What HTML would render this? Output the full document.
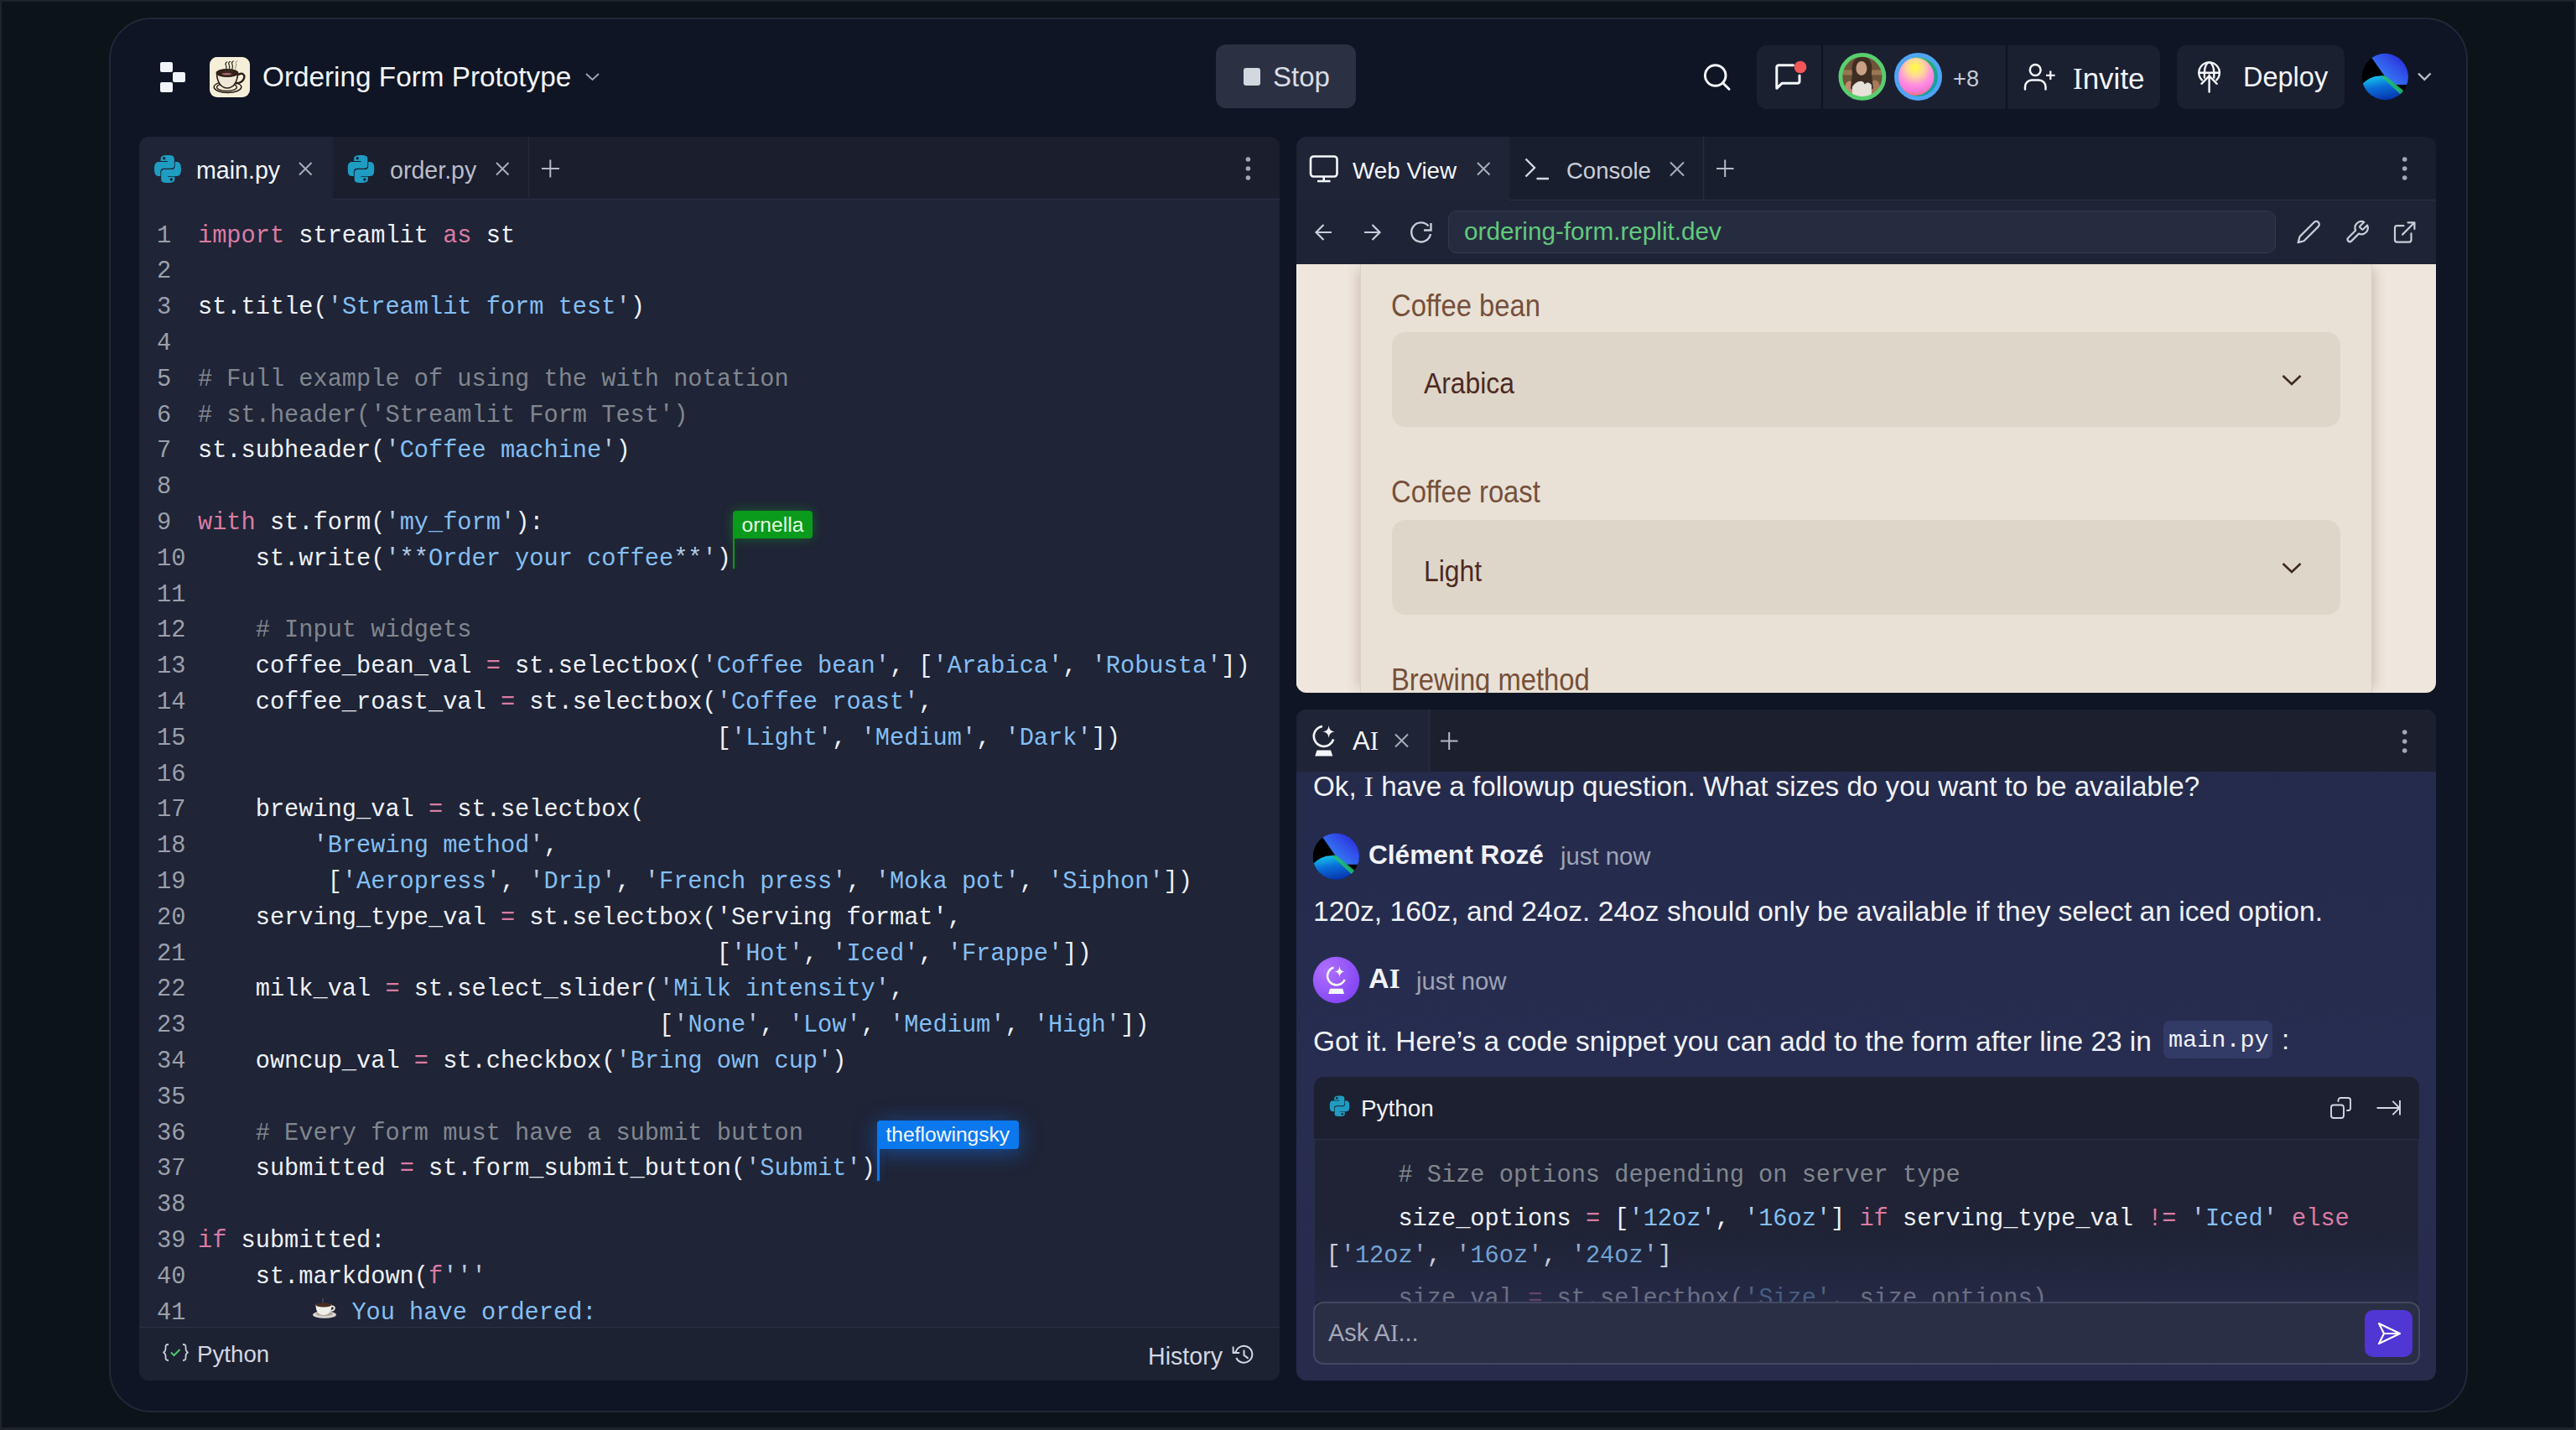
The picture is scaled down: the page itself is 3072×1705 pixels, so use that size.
<!DOCTYPE html>
<html><head><meta charset="utf-8">
<style>
*{margin:0;padding:0;box-sizing:border-box}
html,body{width:3072px;height:1705px;overflow:hidden}
body{background:#0c1319;font-family:"Liberation Sans",sans-serif;color:#eef1f8;position:relative}
.abs{position:absolute}
#frame{position:absolute;left:0;top:0;width:3072px;height:1705px;border:2px solid #1f242c;border-bottom-width:3px}
#win{position:absolute;left:130px;top:21px;width:2813px;height:1663px;border-radius:50px;background:#0f1524;border:2px solid #222836}
.panel{position:absolute;border-radius:12px;overflow:hidden}
#editor{left:166px;top:163px;width:1360px;height:1483px;background:#1f2436}
#edtabs{position:absolute;left:0;top:0;width:1360px;height:75px;background:#1a1e2d;border-bottom:1px solid #2b3044}
.tab{position:absolute;top:0;height:75px}
.tabtxt{position:absolute;font-size:28.6px;white-space:nowrap}
.ln{position:absolute;left:21px;width:60px;height:42.8px;line-height:42.8px;font-family:"Liberation Mono",monospace;font-size:28.65px;color:#9ba0ac}
.cl{position:absolute;left:70px;height:42.8px;line-height:42.8px;font-family:"Liberation Mono",monospace;font-size:28.65px;color:#eef1f8;white-space:pre}
.k{color:#db7ba3}
.s{color:#84bff3}
.q{color:#b3c9e3}
.c{color:#81868f}
.emo{display:inline-block;width:28.7px}
#status{position:absolute;left:0;top:1419px;width:1360px;height:64px;border-top:1px solid #2c3145;background:#1d2233}
#webview{left:1546px;top:163px;width:1359px;height:663px;background:#191e2f}
#ai{left:1546px;top:846px;width:1359px;height:800px;background:linear-gradient(180deg,#242a4a 0%,#272d50 55%,#272c4d 100%)}
</style></head>
<body>
<div id="frame"></div>
<div id="win"></div>

<!-- HEADER -->
<div class="abs" style="left:191px;top:74px;width:15px;height:12px;background:#f2f4fb;border-radius:2px"></div>
<div class="abs" style="left:206px;top:86px;width:15px;height:12px;background:#f2f4fb;border-radius:2px"></div>
<div class="abs" style="left:191px;top:98px;width:15px;height:12px;background:#f2f4fb;border-radius:2px"></div>
<div class="abs" style="left:249.5px;top:67.5px;width:48px;height:48px;background:#f5eed8;border-radius:9px"></div>
<div class="abs" style="left:313px;top:68px;font-size:33.3px;line-height:48px;color:#f3f5fa;white-space:nowrap">Ordering Form Prototype</div>

<div class="abs" style="left:1450px;top:53px;width:167px;height:76px;background:#2b3143;border-radius:12px"></div>
<div class="abs" style="left:1483px;top:81px;width:20px;height:21px;background:#d3d7e0;border-radius:3px"></div>
<div class="abs" style="left:1518px;top:68px;font-size:33px;line-height:48px;color:#d9dde6">Stop</div>

<div class="abs" style="left:2095px;top:54px;width:481px;height:76px;background:#1b2031;border-radius:12px"></div>
<div class="abs" style="left:2596px;top:54px;width:200px;height:76px;background:#1b2031;border-radius:12px"></div>
<div class="abs" style="left:2472px;top:69.5px;font-size:35px;line-height:48px;color:#f3f5fa"><span style="font-family:'Liberation Serif',serif">I</span>nvite</div>
<div class="abs" style="left:2675px;top:68px;font-size:32.5px;line-height:48px;color:#f3f5fa">Deploy</div>
<div class="abs" style="left:2329px;top:72px;font-size:27.2px;line-height:44px;color:#c6cad4">+8</div>

<!-- EDITOR -->
<div class="panel" id="editor">
  <div id="edtabs">
    <div class="tab" style="left:0;width:231px;background:#1f2436"></div>
    <div class="tab" style="left:231px;width:234px;border-right:1px solid #262b3c"></div>
    <div class="tabtxt" style="left:68px;top:17.5px;line-height:44px;color:#f3f5fa">main.py</div>
    <div class="tabtxt" style="left:299px;top:17.5px;line-height:44px;color:#b9bdc8">order.py</div>
  </div>
  <div class="ln" style="top:97.6px">1</div><div class="cl" style="top:97.6px"><span class="k">import</span> streamlit <span class="k">as</span> st</div>
<div class="ln" style="top:140.4px">2</div><div class="cl" style="top:140.4px"></div>
<div class="ln" style="top:183.2px">3</div><div class="cl" style="top:183.2px">st.title(<span class="q">&#x27;</span><span class="s">Streamlit form test</span><span class="q">&#x27;</span>)</div>
<div class="ln" style="top:226.0px">4</div><div class="cl" style="top:226.0px"></div>
<div class="ln" style="top:268.8px">5</div><div class="cl" style="top:268.8px"><span class="c"># Full example of using the with notation</span></div>
<div class="ln" style="top:311.6px">6</div><div class="cl" style="top:311.6px"><span class="c"># st.header(&#x27;Streamlit Form Test&#x27;)</span></div>
<div class="ln" style="top:354.4px">7</div><div class="cl" style="top:354.4px">st.subheader(<span class="q">&#x27;</span><span class="s">Coffee machine</span><span class="q">&#x27;</span>)</div>
<div class="ln" style="top:397.2px">8</div><div class="cl" style="top:397.2px"></div>
<div class="ln" style="top:440.0px">9</div><div class="cl" style="top:440.0px"><span class="k">with</span> st.form(<span class="q">&#x27;</span><span class="s">my_form</span><span class="q">&#x27;</span>):</div>
<div class="ln" style="top:482.8px">10</div><div class="cl" style="top:482.8px">    st.write(<span class="q">&#x27;**</span><span class="s">Order your coffee</span><span class="q">**&#x27;</span>)</div>
<div class="ln" style="top:525.6px">11</div><div class="cl" style="top:525.6px"></div>
<div class="ln" style="top:568.4px">12</div><div class="cl" style="top:568.4px">    <span class="c"># Input widgets</span></div>
<div class="ln" style="top:611.2px">13</div><div class="cl" style="top:611.2px">    coffee_bean_val <span class="k">=</span> st.selectbox(<span class="q">&#x27;</span><span class="s">Coffee bean</span><span class="q">&#x27;</span>, [<span class="q">&#x27;</span><span class="s">Arabica</span><span class="q">&#x27;</span>, <span class="q">&#x27;</span><span class="s">Robusta</span><span class="q">&#x27;</span>])</div>
<div class="ln" style="top:654.0px">14</div><div class="cl" style="top:654.0px">    coffee_roast_val <span class="k">=</span> st.selectbox(<span class="q">&#x27;</span><span class="s">Coffee roast</span><span class="q">&#x27;</span>,</div>
<div class="ln" style="top:696.8px">15</div><div class="cl" style="top:696.8px">                                    [<span class="q">&#x27;</span><span class="s">Light</span><span class="q">&#x27;</span>, <span class="q">&#x27;</span><span class="s">Medium</span><span class="q">&#x27;</span>, <span class="q">&#x27;</span><span class="s">Dark</span><span class="q">&#x27;</span>])</div>
<div class="ln" style="top:739.6px">16</div><div class="cl" style="top:739.6px"></div>
<div class="ln" style="top:782.4px">17</div><div class="cl" style="top:782.4px">    brewing_val <span class="k">=</span> st.selectbox(</div>
<div class="ln" style="top:825.2px">18</div><div class="cl" style="top:825.2px">        <span class="q">&#x27;</span><span class="s">Brewing method</span><span class="q">&#x27;</span>,</div>
<div class="ln" style="top:868.0px">19</div><div class="cl" style="top:868.0px">         [<span class="q">&#x27;</span><span class="s">Aeropress</span><span class="q">&#x27;</span>, <span class="q">&#x27;</span><span class="s">Drip</span><span class="q">&#x27;</span>, <span class="q">&#x27;</span><span class="s">French press</span><span class="q">&#x27;</span>, <span class="q">&#x27;</span><span class="s">Moka pot</span><span class="q">&#x27;</span>, <span class="q">&#x27;</span><span class="s">Siphon</span><span class="q">&#x27;</span>])</div>
<div class="ln" style="top:910.8px">20</div><div class="cl" style="top:910.8px">    serving_type_val <span class="k">=</span> st.selectbox(&#x27;Serving format&#x27;,</div>
<div class="ln" style="top:953.6px">21</div><div class="cl" style="top:953.6px">                                    [<span class="q">&#x27;</span><span class="s">Hot</span><span class="q">&#x27;</span>, <span class="q">&#x27;</span><span class="s">Iced</span><span class="q">&#x27;</span>, <span class="q">&#x27;</span><span class="s">Frappe</span><span class="q">&#x27;</span>])</div>
<div class="ln" style="top:996.4px">22</div><div class="cl" style="top:996.4px">    milk_val <span class="k">=</span> st.select_slider(<span class="q">&#x27;</span><span class="s">Milk intensity</span><span class="q">&#x27;</span>,</div>
<div class="ln" style="top:1039.2px">23</div><div class="cl" style="top:1039.2px">                                [<span class="q">&#x27;</span><span class="s">None</span><span class="q">&#x27;</span>, <span class="q">&#x27;</span><span class="s">Low</span><span class="q">&#x27;</span>, <span class="q">&#x27;</span><span class="s">Medium</span><span class="q">&#x27;</span>, <span class="q">&#x27;</span><span class="s">High</span><span class="q">&#x27;</span>])</div>
<div class="ln" style="top:1082.0px">34</div><div class="cl" style="top:1082.0px">    owncup_val <span class="k">=</span> st.checkbox(<span class="q">&#x27;</span><span class="s">Bring own cup</span><span class="q">&#x27;</span>)</div>
<div class="ln" style="top:1124.8px">35</div><div class="cl" style="top:1124.8px"></div>
<div class="ln" style="top:1167.6px">36</div><div class="cl" style="top:1167.6px">    <span class="c"># Every form must have a submit button</span></div>
<div class="ln" style="top:1210.4px">37</div><div class="cl" style="top:1210.4px">    submitted <span class="k">=</span> st.form_submit_button(<span class="q">&#x27;</span><span class="s">Submit</span><span class="q">&#x27;</span>)</div>
<div class="ln" style="top:1253.2px">38</div><div class="cl" style="top:1253.2px"></div>
<div class="ln" style="top:1296.0px">39</div><div class="cl" style="top:1296.0px"><span class="k">if</span> submitted:</div>
<div class="ln" style="top:1338.8px">40</div><div class="cl" style="top:1338.8px">    st.markdown(<span class="k">f</span><span class="q">&#x27;&#x27;&#x27;</span></div>
<div class="ln" style="top:1381.6px">41</div><div class="cl" style="top:1381.6px">        <span class="emo"></span> <span class="s">You have ordered:</span></div>
  <div id="status">
    <div class="tabtxt" style="left:69px;top:10px;line-height:44px;color:#d3d7e0;font-size:27.7px">Python</div>
    <div class="tabtxt" style="left:1203px;top:12px;line-height:44px;color:#d3d7e0">History</div>
  </div>
</div>

<!-- WEBVIEW -->
<div class="panel" id="webview">
  <div class="abs" style="left:0;top:0;width:254px;height:75px;background:#1f2436"></div>
  <div class="abs" style="left:0;top:75px;width:1359px;height:77px;background:#1e2335"></div><div class="abs" style="left:254px;top:75px;width:1105px;height:1px;background:#2b3044"></div>
  <div class="tabtxt" style="left:67px;top:19px;line-height:44px;color:#f3f5fa;font-size:27.8px">Web View</div>
  <div class="tabtxt" style="left:322px;top:19px;line-height:44px;color:#c9cdd7;font-size:27.5px">Console</div>
  <div class="abs" style="left:181px;top:88px;width:987px;height:51px;background:#262c40;border:1.5px solid #343a4f;border-radius:10px"></div>
  <div class="tabtxt" style="left:200px;top:91px;line-height:44px;color:#62c97c;font-size:29.7px">ordering-form.replit.dev</div>
  <div class="abs" style="left:0;top:152px;width:1359px;height:511px;background:#efe6de;border-left:1px solid #f6f0ea"></div>
  <div class="abs" style="left:76px;top:152px;width:1207px;height:511px;background:#e9e1d6;border-left:1.5px solid #d9cfc4;border-right:1.5px solid #d9cfc4;box-shadow:-10px 0 12px -6px rgba(110,80,55,.22),10px 0 12px -6px rgba(110,80,55,.22)"></div>
  <div class="tabtxt" style="left:112.5px;top:180px;line-height:44px;color:#76503a;font-size:36.4px;transform:scaleX(.9);transform-origin:0 0">Coffee bean</div>
  <div class="abs" style="left:114px;top:233px;width:1131px;height:113px;background:#dfd6ca;border-radius:16px"></div>
  <div class="tabtxt" style="left:152px;top:272px;line-height:44px;color:#4d2a22;font-size:34.7px;transform:scaleX(.918);transform-origin:0 0">Arabica</div>
  <div class="tabtxt" style="left:112.5px;top:402px;line-height:44px;color:#76503a;font-size:36.4px;transform:scaleX(.9);transform-origin:0 0">Coffee roast</div>
  <div class="abs" style="left:114px;top:457px;width:1131px;height:113px;background:#dfd6ca;border-radius:16px"></div>
  <div class="tabtxt" style="left:152px;top:496px;line-height:44px;color:#4d2a22;font-size:34.7px;transform:scaleX(.918);transform-origin:0 0">Light</div>
  <div class="tabtxt" style="left:112.5px;top:626px;line-height:44px;color:#76503a;font-size:36.4px;transform:scaleX(.9);transform-origin:0 0">Brewing method</div>
</div>

<!-- AI -->
<div class="panel" id="ai">
  <div class="abs" style="left:0;top:0;width:1359px;height:74px;background:#1b1f2e"></div>
  <div class="abs" style="left:0;top:0;width:158px;height:74px;background:#1f2436"></div>
  <div class="tabtxt" style="left:67px;top:16px;line-height:44px;color:#f3f5fa;font-size:31px">A<span style="font-family:'Liberation Serif',serif">I</span></div>
  <div class="tabtxt" style="left:20px;top:70px;line-height:44px;color:#f0f2f8;font-size:33.2px">Ok, <span style="font-family:'Liberation Serif',serif">I</span> have a followup question. What sizes do you want to be available?</div>
  <div class="tabtxt" style="left:86px;top:151px;line-height:44px;color:#f0f2f8;font-size:31.6px;font-weight:700">Clément Rozé</div>
  <div class="tabtxt" style="left:315px;top:153px;line-height:44px;color:#9ea3b5;font-size:29.3px">just now</div>
  <div class="tabtxt" style="left:20px;top:219px;line-height:44px;color:#f0f2f8;font-size:33.6px">120z, 160z, and 24oz. 24oz should only be available if they select an iced option.</div>
  <div class="tabtxt" style="left:86px;top:298px;line-height:44px;color:#f0f2f8;font-size:34px;font-weight:700">A<span style="font-family:'Liberation Serif',serif">I</span></div>
  <div class="tabtxt" style="left:143px;top:302px;line-height:44px;color:#9ea3b5;font-size:29.3px">just now</div>
  <div class="tabtxt" style="left:20px;top:374px;line-height:44px;color:#f0f2f8;font-size:33.4px">Got it. Here’s a code snippet you can add to the form after line 23 in</div>
  <div class="abs" style="left:1034px;top:371px;width:130px;height:45px;background:#323a66;border-radius:8px"></div>
  <div class="tabtxt" style="left:1040px;top:373px;line-height:44px;color:#f0f2f8;font-family:'Liberation Mono';font-size:28.5px">main.py</div>
  <div class="tabtxt" style="left:1175px;top:372px;line-height:44px;color:#f0f2f8;font-size:33px">:</div>
  <div class="abs" style="left:21px;top:438px;width:1318px;height:300px;background:#1f2335;border-radius:12px 12px 0 0;border:1px solid #2a2f44"></div>
  <div class="abs" style="left:21px;top:438px;width:1318px;height:75px;background:#1c2030;border-radius:12px 12px 0 0;border-bottom:1px solid #2a2f44"></div>
  <div class="tabtxt" style="left:77px;top:454px;line-height:44px;color:#f0f2f8;font-size:27.9px">Python</div>
  <div class="abs" style="left:20px;top:706px;width:1320px;height:75px;background:#2b2f45;border:2px solid #434861;border-radius:12px"></div>
  <div class="tabtxt" style="left:38px;top:721px;line-height:44px;color:#a3a7b8;font-size:28.9px">Ask A<span style="font-family:'Liberation Serif',serif">I</span>...</div>
  <div class="abs" style="left:1274px;top:716px;width:57px;height:56px;background:#5036d3;border-radius:10px"></div>
</div>



<!-- CURSORS -->
<div class="abs" style="left:874px;top:608.7px;width:94.6px;height:33px;background:#0a9a1c;border-radius:4px 4px 4px 0;box-shadow:0 0 14px rgba(20,200,40,.35)"></div>
<div class="abs" style="left:874px;top:636px;width:2.4px;height:42px;background:#0a9a1c;box-shadow:0 0 8px rgba(20,200,40,.3)"></div>
<div class="abs" style="left:884.5px;top:604px;font-size:24.6px;line-height:44px;color:#e8ffe4;white-space:nowrap">ornella</div>
<div class="abs" style="left:1046px;top:1336px;width:169px;height:34px;background:#0b78ee;border-radius:4px 4px 4px 0;box-shadow:0 4px 26px rgba(20,120,255,.5)"></div>
<div class="abs" style="left:1046px;top:1364px;width:2.6px;height:44px;background:#0b78ee;box-shadow:0 0 8px rgba(20,120,255,.4)"></div>
<div class="abs" style="left:1056.5px;top:1331px;font-size:24.6px;line-height:44px;color:#f4f8ff;white-space:nowrap">theflowingsky</div>

<!-- SNIPPET CODE -->
<div class="abs" style="left:1567px;top:1359px;width:1318px;height:193px;background:linear-gradient(180deg,rgba(38,43,72,0) 55%,rgba(38,43,74,.75) 100%)"></div>
<div class="cl" style="left:1581.5px;top:1381px"><span class="c">     # Size options depending on server type</span></div>
<div class="cl" style="left:1581.5px;top:1433.3px">     size_options <span class="k">=</span> [<span class="q">'</span><span class="s">12oz</span><span class="q">'</span>, <span class="q">'</span><span class="s">16oz</span><span class="q">'</span>] <span class="k">if</span> serving_type_val <span class="k">!=</span> <span class="q">'</span><span class="s">Iced</span><span class="q">'</span> <span class="k">else</span></div>
<div class="cl" style="left:1581.5px;top:1477.1px;opacity:.82">[<span class="q">'</span><span class="s">12oz</span><span class="q">'</span>, <span class="q">'</span><span class="s">16oz</span><span class="q">'</span>, <span class="q">'</span><span class="s">24oz</span><span class="q">'</span>]</div>
<div class="abs" style="left:1567px;top:1526px;width:1318px;height:26px;overflow:hidden">
  <div class="cl" style="left:14.5px;top:2px;opacity:.35">     size_val <span class="k">=</span> st.selectbox(<span class="q">'</span><span class="s">Size</span><span class="q">'</span>, size_options)</div>
</div>

<!-- EMOJI line 41 -->
<svg class="abs" style="left:372px;top:1546px" width="30" height="27" viewBox="0 0 30 27">
  <ellipse cx="15" cy="21.5" rx="14" ry="4.3" fill="#d8d4cc"/>
  <ellipse cx="15" cy="20.5" rx="10" ry="2.6" fill="#a9a49a"/>
  <path d="M4.5 9.5C4.5 18 8 22 14 22S23.5 18 23.5 9.5Z" fill="#f1efe9"/>
  <path d="M23 11.5C28 10.5 28.5 16.5 22 17" fill="none" stroke="#e6e2da" stroke-width="2"/>
  <ellipse cx="14" cy="9.8" rx="9.5" ry="2.6" fill="#4a2d1e"/>
  <path d="M13 7C12 5 14 4 13 2" fill="none" stroke="#8f8aa8" stroke-width="1" opacity=".6"/>
</svg>

<!-- ICONS LAYER -->
<svg class="abs" style="left:0;top:0" width="3072" height="1705" viewBox="0 0 3072 1705">
<defs>
  <symbol id="py" viewBox="0 0 32 34">
    <path fill="#1f9cc2" d="M7.6 5C7.6 1.5 10 .5 16 .5S23.8 1.5 23.8 5V12.5C23.8 15 22.3 16.3 19.8 16.3H11.5C8.8 16.3 7.3 17.8 7.3 20.5V25.5H5C1.5 25.5 0 22 0 17S1.5 8.5 5 8.5H16V7.6H7.6Z"/>
    <path fill="#1f9cc2" transform="rotate(180 16 17)" d="M7.6 5C7.6 1.5 10 .5 16 .5S23.8 1.5 23.8 5V12.5C23.8 15 22.3 16.3 19.8 16.3H11.5C8.8 16.3 7.3 17.8 7.3 20.5V25.5H5C1.5 25.5 0 22 0 17S1.5 8.5 5 8.5H16V7.6H7.6Z"/>
    <circle cx="11.7" cy="4.4" r="1.7" fill="#0f2a3a"/>
    <circle cx="20.3" cy="29.6" r="1.7" fill="#0f2a3a"/>
  </symbol>
  <radialGradient id="orb" cx="0.5" cy="0.3" r="0.75" fx="0.5" fy="0.25">
    <stop offset="0" stop-color="#ffff3a"/>
    <stop offset="0.3" stop-color="#ffd89a"/>
    <stop offset="0.6" stop-color="#ff8ee0"/>
    <stop offset="0.8" stop-color="#f77ad8"/>
    <stop offset="1" stop-color="#ff6a4a"/>
  </radialGradient>
  <linearGradient id="orbg2" x1="0" y1="0" x2="1" y2="1">
    <stop offset="0" stop-color="#9ad0a0"/>
    <stop offset="0.5" stop-color="#20b070"/>
    <stop offset="1" stop-color="#1090d0"/>
  </linearGradient>
  <linearGradient id="pblue" x1="0" y1="1" x2="1" y2="0">
    <stop offset="0" stop-color="#3a9cff"/>
    <stop offset="0.55" stop-color="#3050e8"/>
    <stop offset="1" stop-color="#2208c8"/>
  </linearGradient>
  <linearGradient id="pgreen" x1="0" y1="0" x2="0.3" y2="1">
    <stop offset="0" stop-color="#18d8f0"/>
    <stop offset="0.5" stop-color="#0a70d8"/>
    <stop offset="1" stop-color="#0838b0"/>
  </linearGradient>
  <clipPath id="pclip"><circle cx="0" cy="0" r="27.7"/></clipPath>
  <radialGradient id="aiav" cx="0.3" cy="0.3" r="0.9">
    <stop offset="0" stop-color="#b070ff"/>
    <stop offset="1" stop-color="#7a3ef0"/>
  </radialGradient>
</defs>

<!-- app icon cup -->
<g transform="translate(249.5 67.5)">
  <ellipse cx="22" cy="36.3" rx="16.3" ry="6.6" fill="none" stroke="#2b1d16" stroke-width="1.6"/>
  <ellipse cx="21" cy="36.5" rx="12" ry="4.4" fill="none" stroke="#2b1d16" stroke-width="1.3"/>
  <path d="M9 19C9 30 14 37.5 21.5 37.5S34 30 34 19Z" fill="#efe8d6" stroke="#2b1d16" stroke-width="1.6"/>
  <ellipse cx="21.5" cy="19.5" rx="12.5" ry="4.2" fill="#3a2018" stroke="#2b1d16" stroke-width="1.4"/>
  <ellipse cx="21" cy="20.8" rx="6" ry="1.5" fill="#9a6a70"/>
  <path d="M33.5 22C40 18 43.5 22 41 27S34 31.5 31.5 32" fill="none" stroke="#2b1d16" stroke-width="2.4"/>
  <path d="M20 19C18 16 22 14 20 10.5S21.5 7 21.5 6M23.8 19C21.8 16 25.8 14 23.8 10S25.3 6.5 25.3 5.5M27.5 18.5C25.5 15.5 29.5 13 27.5 9.5S29 6 29 5" fill="none" stroke="#3a3428" stroke-width="1.3"/><path d="M31.5 15C30 12.5 33.5 10.5 32 8S33.5 5.5 34 5" fill="none" stroke="#8c8476" stroke-width="1"/>
</g>
<!-- title chevron -->
<path d="M699 88L706.5 95L714 88" fill="none" stroke="#9ea3b2" stroke-width="2"/>

<!-- search -->
<circle cx="2045.7" cy="90" r="12.3" fill="none" stroke="#f5f7fb" stroke-width="3"/>
<path d="M2054.5 98.8L2062 106.3" stroke="#f5f7fb" stroke-width="3" stroke-linecap="round"/>
<!-- chat -->
<path d="M2138.5 77.8H2121A2.5 2.5 0 0 0 2118.8 80.3V105.3L2125 99.3H2143.5A2.5 2.5 0 0 0 2146 96.8V90" fill="none" stroke="#f5f7fb" stroke-width="3" stroke-linejoin="round" stroke-linecap="round"/>
<circle cx="2147" cy="80" r="7.3" fill="#f25757"/>
<line x1="2173" y1="54" x2="2173" y2="130" stroke="#0f1422" stroke-width="2.5"/>
<line x1="2393" y1="54" x2="2393" y2="130" stroke="#0f1422" stroke-width="2.5"/>

<!-- green avatar -->
<g transform="translate(2220.9 91.4)">
  <circle r="26" fill="#6f5439"/>
  <rect x="-26" y="-8" width="52" height="6" fill="#9a7652"/>
  <ellipse cx="-15" cy="14" rx="6" ry="9" fill="#c08a6c"/>
  <ellipse cx="15" cy="13" rx="6" ry="9" fill="#a87a5c"/>
  <path d="M-12 -4C-14 -18 -8 -24 0 -24S13 -18 11 -4L13 14L4 18L-6 18L-14 14Z" fill="#3e2e22"/>
  <ellipse cx="-1" cy="-10" rx="6.5" ry="8.5" fill="#caa082"/>
  <path d="M-12 26V12C-8 6 -3 4 1 6L3 9C6 6 9 7 11 10V26Z" fill="#e6e1d9"/>
  <circle r="26" fill="none" stroke="#58cf6e" stroke-width="4.8"/>
</g>
<!-- blue avatar -->
<g transform="translate(2287.5 91.4)">
  <circle r="26" fill="url(#orbg2)"/>
  <circle cx="-3.5" cy="0" r="22.5" fill="url(#orb)"/>
  <circle r="26" fill="none" stroke="#4fa5f3" stroke-width="5"/>
</g>

<!-- invite icon -->
<circle cx="2427.2" cy="83.5" r="6.4" fill="none" stroke="#f5f7fb" stroke-width="2.5"/>
<path d="M2415 106.5V103.5A8 8 0 0 1 2423 95.5H2431.5A8 8 0 0 1 2439.5 103.5V106.5" fill="none" stroke="#f5f7fb" stroke-width="2.5" stroke-linecap="round"/>
<path d="M2440 89.8H2450.6M2445.3 84.5V95.1" stroke="#f5f7fb" stroke-width="2.3"/>

<!-- deploy icon -->
<g fill="none" stroke="#f5f7fb" stroke-width="2.4" stroke-linecap="round">
  <path d="M2625.9 95.4A12.3 12.3 0 1 1 2643.3 95.4"/>
  <path d="M2628.9 92.5V86.7A5.7 12.3 0 0 1 2640.3 86.7V92.5"/>
  <path d="M2622.3 86.7H2646.9"/>
  <path d="M2634.6 109.5V89.5M2625.5 99.8L2634.6 90.5L2643.7 99.8"/>
</g>

<!-- profile avatar -->
<g transform="translate(2844.3 91.5)" clip-path="url(#pclip)">
  <circle r="27.7" fill="#000"/>
  <path d="M-16.5 -23.5A27.7 27.7 0 0 1 27.8 9.5L13 9.5L1 1.5Z" fill="url(#pblue)"/>
  <path d="M-27.8 9.5C-18 -1 -6 -3 2 1L21 18A27.7 27.7 0 0 1 -27.8 9.5Z" fill="url(#pgreen)"/>
  <path d="M-5 -1.5C-1 -2 1.5 -0.5 3 1L22.5 17L18.5 21L-1 3Z" fill="#1fbf6a" opacity=".85"/>
</g>
<path d="M2884 87.5L2891.3 94.8L2898.6 87.5" fill="none" stroke="#b8bdc9" stroke-width="2.4"/>

<!-- EDITOR TAB ICONS -->
<use href="#py" x="184" y="184.4" width="32" height="34"/>
<use href="#py" x="414.5" y="184.4" width="32" height="34"/>
<path d="M357 194L371.5 208.5M371.5 194L357 208.5" stroke="#a9adb9" stroke-width="2"/>
<path d="M592 194L606.5 208.5M606.5 194L592 208.5" stroke="#a9adb9" stroke-width="2"/>
<path d="M646 201H667M656.3 190.5V211.5" stroke="#b6bac5" stroke-width="2"/>
<g fill="#a4a8b5"><circle cx="1488.4" cy="190" r="2.8"/><circle cx="1488.4" cy="201" r="2.8"/><circle cx="1488.4" cy="212" r="2.8"/></g>

<!-- WEBVIEW TAB ICONS -->
<rect x="1563" y="186.5" width="31.5" height="24" rx="3.5" fill="none" stroke="#f5f7fb" stroke-width="2.6"/>
<path d="M1578.7 211V215.5M1571 216H1586.5" stroke="#f5f7fb" stroke-width="2.6"/>
<path d="M1762 194L1776.5 208.5M1776.5 194L1762 208.5" stroke="#a9adb9" stroke-width="2"/>
<path d="M1819.5 189.5L1830 200L1819.5 210.5M1832.5 213H1847" fill="none" stroke="#d5d9e2" stroke-width="2.4"/>
<path d="M1992 193.5L2008 209.5M2008 193.5L1992 209.5" stroke="#a9adb9" stroke-width="2"/>
<path d="M2047 201H2067.5M2057.2 190.5V211" stroke="#b6bac5" stroke-width="2"/>
<line x1="2031.5" y1="163" x2="2031.5" y2="238" stroke="#262b3d" stroke-width="1.5"/>
<g fill="#a4a8b5"><circle cx="2867.7" cy="190" r="2.8"/><circle cx="2867.7" cy="201" r="2.8"/><circle cx="2867.7" cy="212" r="2.8"/></g>
<!-- toolbar -->
<path d="M1588 277H1570M1578.5 268L1569.5 277L1578.5 286" fill="none" stroke="#c9cdd8" stroke-width="2.2"/>
<path d="M1627 277H1645M1636.5 268L1645.5 277L1636.5 286" fill="none" stroke="#c9cdd8" stroke-width="2.2"/>
<path d="M1703.5 269.5A11.5 11.5 0 1 0 1706 279" fill="none" stroke="#c9cdd8" stroke-width="2.4"/>
<path d="M1706.5 266V274.5H1698" fill="none" stroke="#c9cdd8" stroke-width="2.4"/>
<g transform="translate(2738.1 261.2) scale(1.27)" fill="none" stroke="#c9cdd8" stroke-width="1.75" stroke-linecap="round" stroke-linejoin="round"><path d="M17 3a2.828 2.828 0 1 1 4 4L7.5 20.5 2 22l1.5-5.5L17 3z"/></g>
<g transform="translate(2795.8 261.5) scale(1.27)" fill="none" stroke="#c9cdd8" stroke-width="1.75" stroke-linecap="round" stroke-linejoin="round"><path d="M14.7 6.3a1 1 0 0 0 0 1.4l1.6 1.6a1 1 0 0 0 1.4 0l3.77-3.77a6 6 0 0 1-7.94 7.94l-6.91 6.91a2.12 2.12 0 0 1-3-3l6.91-6.91a6 6 0 0 1 7.94-7.94l-3.76 3.76z"/></g>
<g transform="translate(2852.1 261.4) scale(1.3)" fill="none" stroke="#c9cdd8" stroke-width="1.7" stroke-linecap="round" stroke-linejoin="round"><path d="M18 13v6a2 2 0 0 1-2 2H5a2 2 0 0 1-2-2V8a2 2 0 0 1 2-2h6M15 3h6v6M10 14L21 3"/></g>
<!-- select chevrons -->
<path d="M2722.5 448L2733 458L2743.5 448" fill="none" stroke="#3e2a22" stroke-width="2.6"/>
<path d="M2722.5 672L2733 682L2743.5 672" fill="none" stroke="#3e2a22" stroke-width="2.6"/>

<!-- AI TAB ICONS -->
<g fill="#f5f7fb">
  <path d="M1577 866A12 12 0 1 0 1590.2 881.5" fill="none" stroke="#f5f7fb" stroke-width="2.6"/>
  <path d="M1584.6 865C1585.5 870 1586.5 871.5 1591.7 872.4C1586.5 873.3 1585.5 874.8 1584.6 879.8C1583.7 874.8 1582.7 873.3 1577.5 872.4C1582.7 871.5 1583.7 870 1584.6 865Z"/>
  <path d="M1570.5 894.5H1587L1589.3 901.5H1568.2Z"/>
</g>
<line x1="1704.5" y1="846" x2="1704.5" y2="920" stroke="#2a2f40" stroke-width="1.5"/>
<path d="M1664 875.5L1679 890.5M1679 875.5L1664 890.5" stroke="#a9adb9" stroke-width="2"/>
<path d="M1718 883.5H1738.5M1728.2 873V894" stroke="#b6bac5" stroke-width="2"/>
<g fill="#a4a8b5"><circle cx="2867.7" cy="873" r="2.8"/><circle cx="2867.7" cy="884" r="2.8"/><circle cx="2867.7" cy="895" r="2.8"/></g>

<!-- Clement avatar -->
<g transform="translate(1593.3 1021.2)" clip-path="url(#pclip)">
  <circle r="27.7" fill="#000"/>
  <path d="M-16.5 -23.5A27.7 27.7 0 0 1 27.8 9.5L13 9.5L1 1.5Z" fill="url(#pblue)"/>
  <path d="M-27.8 9.5C-18 -1 -6 -3 2 1L21 18A27.7 27.7 0 0 1 -27.8 9.5Z" fill="url(#pgreen)"/>
  <path d="M-5 -1.5C-1 -2 1.5 -0.5 3 1L22.5 17L18.5 21L-1 3Z" fill="#1fbf6a" opacity=".85"/>
</g>
<!-- AI avatar -->
<circle cx="1593.5" cy="1168.5" r="27.7" fill="url(#aiav)"/>
<g fill="#f5f7fb">
  <path d="M1590.5 1153.5A10.7 10.7 0 1 0 1603.6 1168" fill="none" stroke="#f5f7fb" stroke-width="2.5"/>
  <path d="M1597.5 1152C1598.3 1156.5 1599.2 1157.8 1603.8 1158.6C1599.2 1159.4 1598.3 1160.7 1597.5 1165.2C1596.7 1160.7 1595.8 1159.4 1591.2 1158.6C1595.8 1157.8 1596.7 1156.5 1597.5 1152Z"/>
  <path d="M1586 1178.8H1601.2L1603 1185H1584.2Z"/>
</g>

<!-- snippet header icons -->
<use href="#py" x="1585.5" y="1306" width="24" height="25.5"/>
<rect x="2780" y="1317.5" width="15" height="15.5" rx="3" fill="none" stroke="#d3d7e2" stroke-width="1.9"/><path d="M2788.5 1313V1311.8A2.8 2.8 0 0 1 2791.3 1309H2800.2A2.8 2.8 0 0 1 2803 1311.8V1321.2A2.8 2.8 0 0 1 2800.2 1324H2799" fill="none" stroke="#d3d7e2" stroke-width="1.9" stroke-linecap="round"/>
<path d="M2834.5 1321H2861M2853.4 1312.8L2861.5 1321L2853.4 1329.1M2862 1312V1329.6" fill="none" stroke="#d3d7e2" stroke-width="1.9"/>

<!-- send icon -->
<path d="M2837 1578L2862 1590L2837 1602L2843 1590Z M2843 1590H2862" fill="none" stroke="#fff" stroke-width="2.2" stroke-linejoin="round"/>

<!-- status icons -->
<path d="M201 1603C197 1603 197.5 1605 197.5 1607.5S196.5 1612 194.5 1612.5C196.5 1613 197.5 1614.5 197.5 1617S197 1622 201 1622" fill="none" stroke="#c9cdd8" stroke-width="1.8"/>
<path d="M218 1603C222 1603 221.5 1605 221.5 1607.5S222.5 1612 224.5 1612.5C222.5 1613 221.5 1614.5 221.5 1617S222 1622 218 1622" fill="none" stroke="#c9cdd8" stroke-width="1.8"/>
<path d="M204 1612.5L207.5 1616L214.5 1609" fill="none" stroke="#4ccb6c" stroke-width="2"/>
<path d="M1474.3 1619A10 10 0 1 0 1473.8 1611.8L1471 1613" fill="none" stroke="#d3d7e0" stroke-width="2"/>
<path d="M1470.6 1605.6V1612.9H1478.2" fill="none" stroke="#d3d7e0" stroke-width="2"/>
<path d="M1483.5 1609.5V1615.7L1488.6 1619.6" fill="none" stroke="#d3d7e0" stroke-width="2"/>
</svg>

</body></html>
